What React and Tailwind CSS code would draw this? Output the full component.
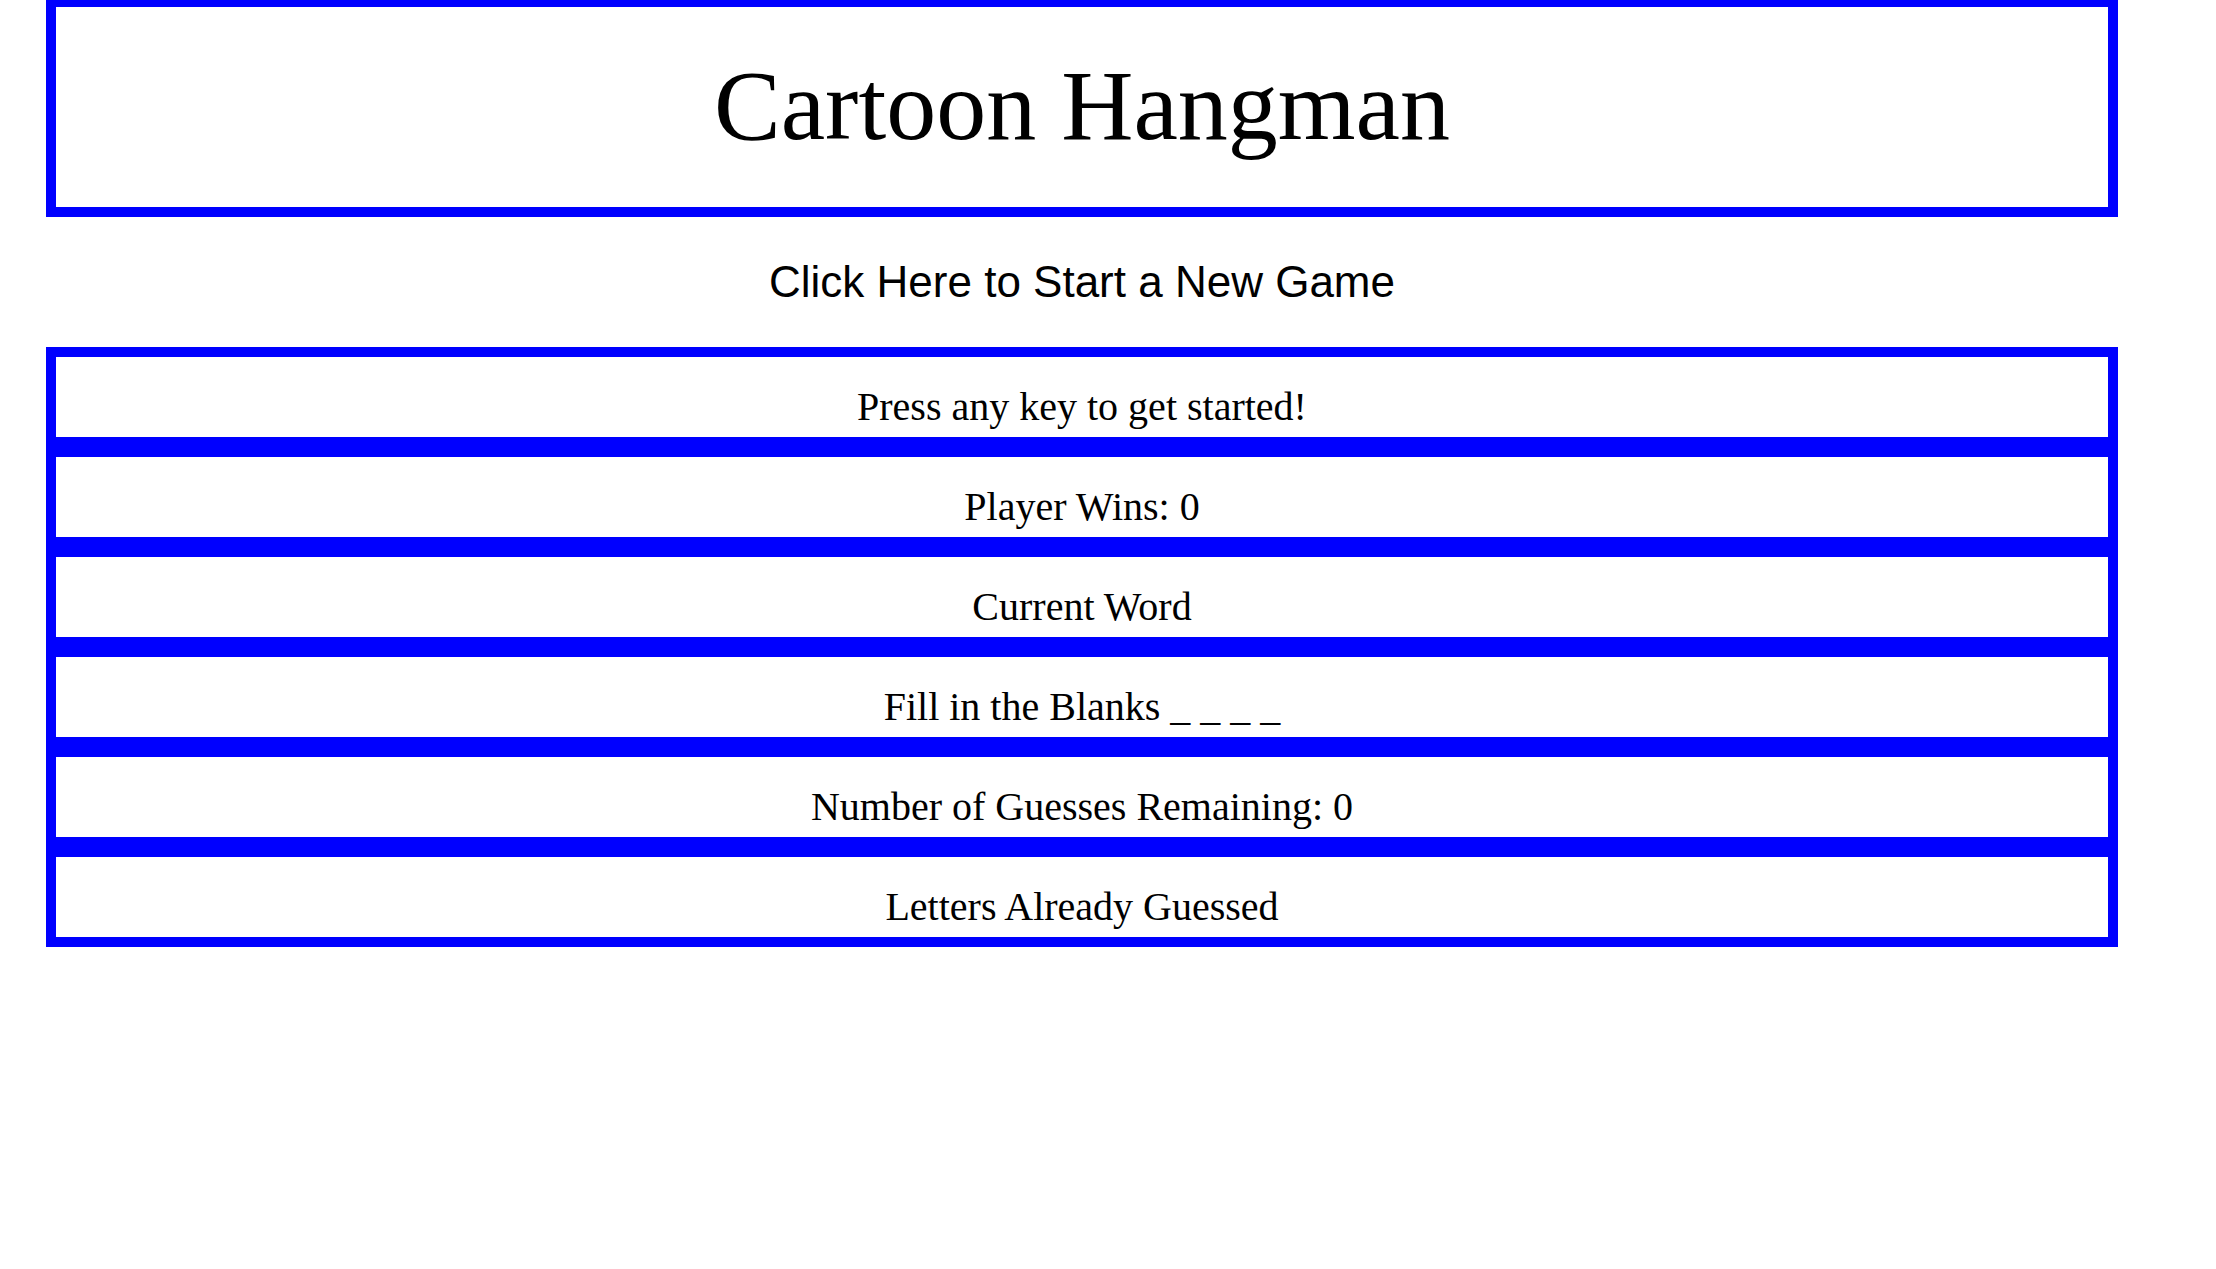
export default function App() {
  const rows = [
    'Press any key to get started!',
    'Player Wins: 0',
    'Current Word',
    'Fill in the Blanks _ _ _ _',
    'Number of Guesses Remaining: 0',
    'Letters Already Guessed',
  ];

  return (
    <div className="min-h-screen bg-white text-black">
      <div className="ml-[46px] w-[2072px]">
        <div className="box-border h-[217px] border-[10px] border-t-[7px] border-[#0000ff] pt-[49px] text-center font-['Liberation_Serif',serif] text-[100px] leading-none">
          Cartoon Hangman
        </div>

        <div className="py-[43px] text-center font-['Liberation_Sans',Arial,sans-serif] text-[44px] leading-none cursor-pointer">
          Click Here to Start a New Game
        </div>

        <div className="flex flex-col">
          {rows.map((r) => (
            <div
              key={r}
              className="box-border h-[100px] border-[10px] border-[#0000ff] pt-[30px] text-center font-['Liberation_Serif',serif] text-[40px] leading-[40px]"
            >
              {r}
            </div>
          ))}
        </div>
      </div>
    </div>
  );
}
